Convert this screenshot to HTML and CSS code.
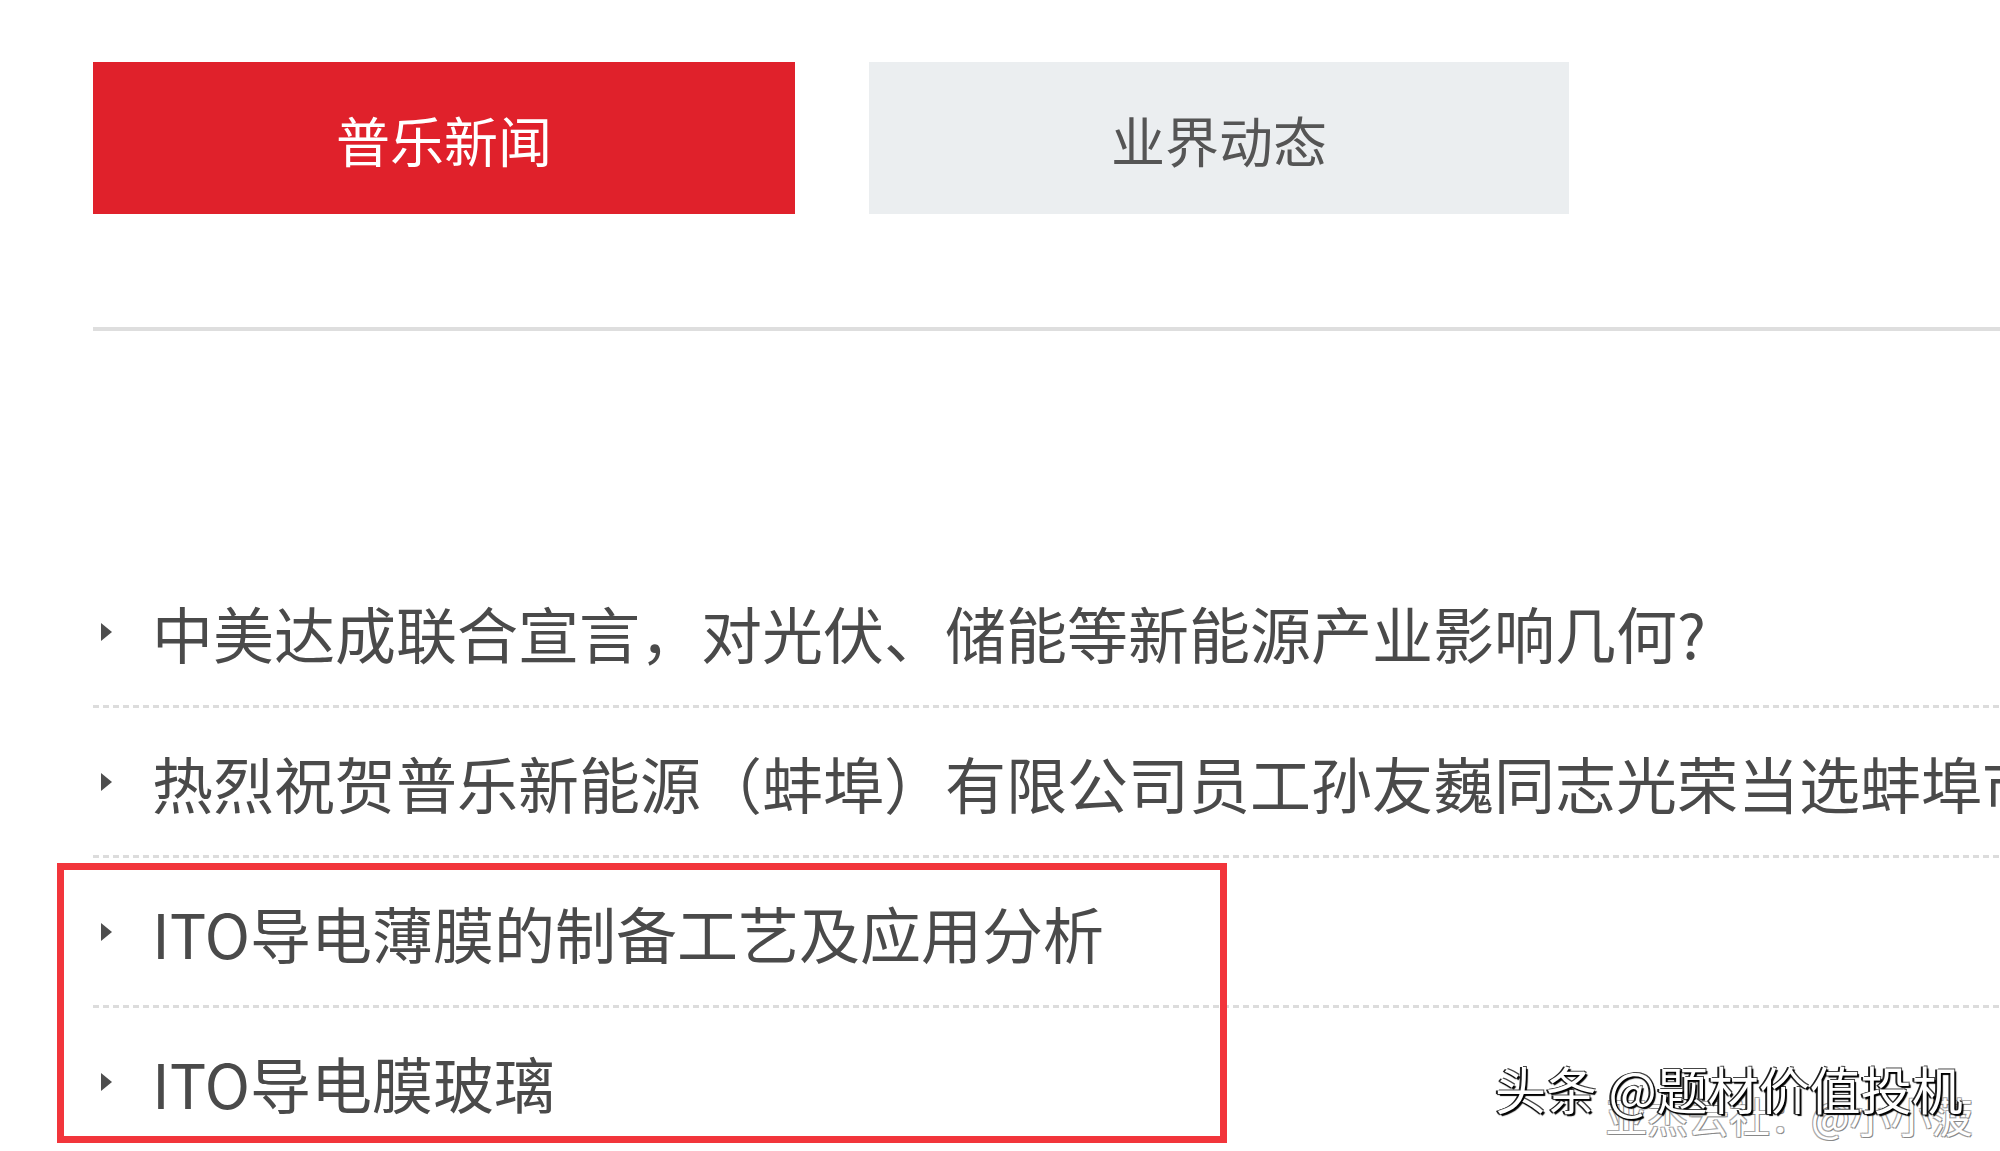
FILE: index.html
```html
<!DOCTYPE html>
<html lang="zh-CN">
<head>
  <meta charset="UTF-8">
  <meta name="viewport" content="width=device-width, initial-scale=1.0">
  <title>普乐新闻</title>
  <link rel="stylesheet" href="styles.css">
</head>
<body>
  <div class="news-box">
    <div class="tabs">
      <div class="tab active">普乐新闻</div>
      <div class="tab">业界动态</div>
    </div>

    <div class="divider"></div>

    <ul class="news-list">
      <li class="news-item"><span class="arrow"></span><span class="title">中美达成联合宣言，对光伏、储能等新能源产业影响几何?</span></li>
      <li class="news-item"><span class="arrow"></span><span class="title">热烈祝贺普乐新能源（蚌埠）有限公司员工孙友巍同志光荣当选蚌埠市人大代表</span></li>
      <li class="news-item"><span class="arrow"></span><span class="title">ITO导电薄膜的制备工艺及应用分析</span></li>
      <li class="news-item"><span class="arrow"></span><span class="title">ITO导电膜玻璃</span></li>
    </ul>
  </div>

  <div class="mark-box"></div>

  <div class="watermark">
    <div class="wm-main">头条 @题材价值投机</div>
    <div class="wm-sub">亚杰云社：@小小菠</div>
  </div>
</body>
</html>
```

FILE: styles.css
```css
html, body {
  margin: 0;
  padding: 0;
  background: #fff;
  overflow: hidden;
}
body {
  font-family: "Noto Sans CJK SC", "Noto Sans", sans-serif;
  width: 2000px;
  height: 1151px;
  position: relative;
}
.news-box {
  padding: 62px 0 0 93px;
}
.tabs {
  display: flex;
  gap: 74px;
}
.tab {
  width: 700px;
  height: 152px;
  background: #ebeef0;
  color: #555;
  font-size: 54px;
  display: flex;
  align-items: center;
  justify-content: center;
  padding-top: 2px;
  box-sizing: border-box;
}
.tab.active {
  width: 702px;
  background: #e0212b;
  color: #fff;
}
.divider {
  margin-top: 113px;
  height: 4px;
  background: #dedede;
}
.news-list {
  list-style: none;
  margin: 227px 0 0;
  padding: 0;
}
.news-item {
  height: 150px;
  box-sizing: border-box;
  padding: 0 0 2px 8px;
  display: flex;
  align-items: center;
  white-space: nowrap;
  background: repeating-linear-gradient(to right, #dcdcdc 0 6px, transparent 6px 10px) left bottom / 100% 3px no-repeat;
}
.arrow {
  width: 0;
  height: 0;
  border-top: 9px solid transparent;
  border-bottom: 9px solid transparent;
  border-left: 11px solid #4e4e4e;
  margin-right: 40px;
  flex-shrink: 0;
}
.title {
  font-size: 61px;
  line-height: 1;
  color: #4a4a4a;
}
.mark-box {
  position: absolute;
  left: 57px;
  top: 863px;
  width: 1170px;
  height: 280px;
  box-sizing: border-box;
  border: 7px solid #f2353b;
}
.watermark {
  position: absolute;
  right: 30px;
  top: 1056px;
  width: 490px;
  height: 95px;
}
.wm-main {
  position: absolute;
  left: 15px;
  top: 0;
  font-size: 51px;
  line-height: 64px;
  color: #fff;
  text-shadow: 2px 2px 1px #000, -1px 1px 1px #222, 1px -1px 0 #444, -2px 0 0 #222;
  white-space: nowrap;
  z-index: 2;
}
.wm-sub {
  position: absolute;
  left: 126px;
  top: 34px;
  font-size: 41px;
  line-height: 50px;
  color: #fff;
  text-shadow: 1px 1px 0 #888, -1px -1px 0 #aaa, 1px -1px 0 #aaa, -1px 1px 0 #aaa;
  white-space: nowrap;
  z-index: 1;
}
```
